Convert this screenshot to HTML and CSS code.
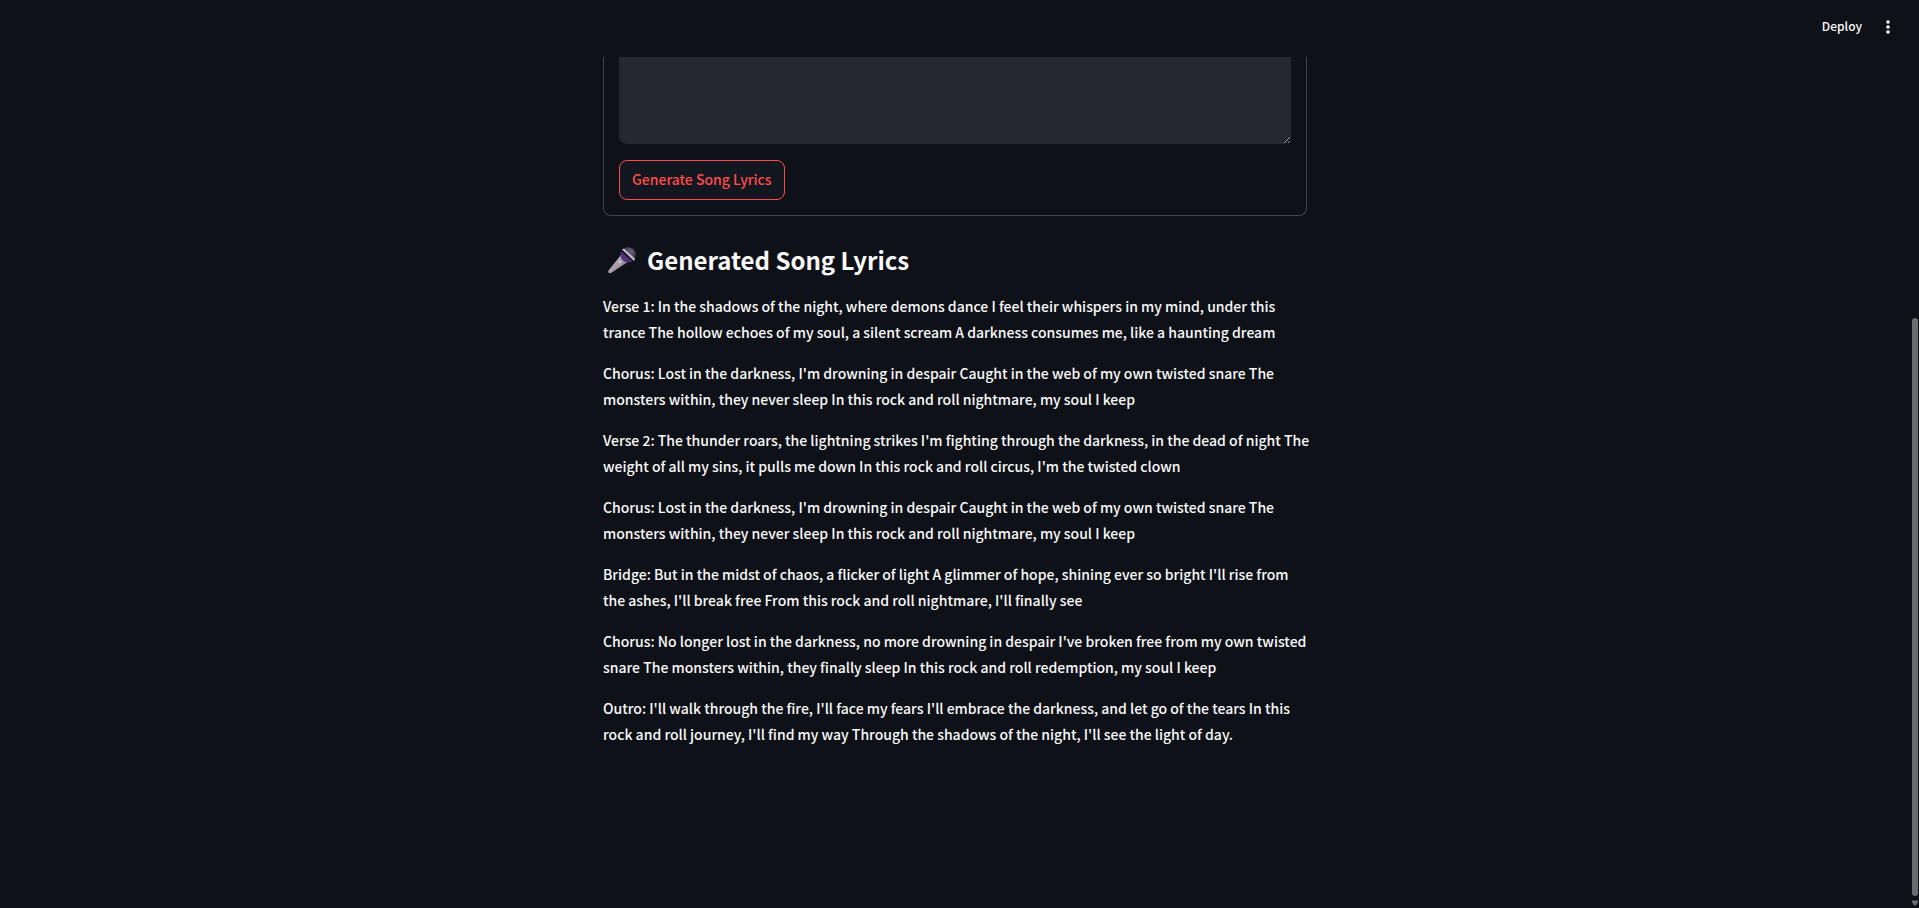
FILE: index.html
```html
<!DOCTYPE html>
<html lang="en">
<head>
<meta charset="utf-8">
<meta name="viewport" content="width=device-width, initial-scale=1">
<title>Song Lyrics Generator</title>
<link rel="stylesheet" href="styles.css">
</head>
<body>
<header class="toolbar">
  <button class="deploy" type="button">Deploy</button>
  <button class="menu" type="button" aria-label="Main menu">
    <svg viewBox="0 0 20 20" width="20" height="20" fill="currentColor" aria-hidden="true"><circle cx="10" cy="5" r="1.8"/><circle cx="10" cy="10" r="1.8"/><circle cx="10" cy="15" r="1.8"/></svg>
  </button>
</header>
<div class="view">
  <main class="content">
    <form class="card">
      <textarea class="prompt" aria-label="Song description"></textarea>
      <button class="generate" type="button">Generate Song Lyrics</button>
    </form>
    <h2 class="title">
      <svg class="mic" viewBox="0 0 30 30" width="30" height="30" aria-hidden="true">
        <defs>
          <linearGradient id="body" x1="0" y1="0" x2="1" y2="1"><stop offset="0.25" stop-color="#b9b2bd"/><stop offset="0.55" stop-color="#a39aa6"/><stop offset="0.8" stop-color="#756c79"/></linearGradient>
          <radialGradient id="head" cx="0.6" cy="0.35" r="0.6"><stop offset="0" stop-color="#6d6279"/><stop offset="1" stop-color="#3b2d4c"/></radialGradient>
        </defs>
        <path d="M14 10 L1.5 25.5 Q0.5 28.5 3.5 28.2 L20.5 17.2 Z" fill="url(#body)"/>
        <path d="M14 6 L25.500 16.500 Q19 19 15.500 15 Q12.500 11.500 14 6Z" fill="#4d3179"/>
        <path d="M16 4.500 Q19 1.500 23 2.500 Q28.500 4 28.700 9.500 Q28.500 13 26.800 14.800 Z" fill="url(#head)"/>
        <path d="M15 4.500 L17 3.500 L28 13.800 L27 16 Z" fill="#c2bdc8"/>
        <circle cx="13" cy="17" r="1.300" fill="#d8d3dc"/>
      </svg>
      <span>Generated Song Lyrics</span>
    </h2>
    <div class="lyrics">
      <p>Verse 1: In the shadows of the night, where demons dance I feel their whispers in my mind, under this<br> trance The hollow echoes of my soul, a silent scream A darkness consumes me, like a haunting dream</p>
      <p>Chorus: Lost in the darkness, I'm drowning in despair Caught in the web of my own twisted snare The<br> monsters within, they never sleep In this rock and roll nightmare, my soul I keep</p>
      <p>Verse 2: The thunder roars, the lightning strikes I'm fighting through the darkness, in the dead of night The<br> weight of all my sins, it pulls me down In this rock and roll circus, I'm the twisted clown</p>
      <p>Chorus: Lost in the darkness, I'm drowning in despair Caught in the web of my own twisted snare The<br> monsters within, they never sleep In this rock and roll nightmare, my soul I keep</p>
      <p>Bridge: But in the midst of chaos, a flicker of light A glimmer of hope, shining ever so bright I'll rise from<br> the ashes, I'll break free From this rock and roll nightmare, I'll finally see</p>
      <p>Chorus: No longer lost in the darkness, no more drowning in despair I've broken free from my own twisted<br> snare The monsters within, they finally sleep In this rock and roll redemption, my soul I keep</p>
      <p>Outro: I'll walk through the fire, I'll face my fears I'll embrace the darkness, and let go of the tears In this<br> rock and roll journey, I'll find my way Through the shadows of the night, I'll see the light of day.</p>
    </div>
  </main>
  <div class="scrollbar" aria-hidden="true">
    <div class="thumb"></div>
    <svg viewBox="0 0 6 6" width="6" height="6"><path d="M0 0.500H6V2L4 5.500H2L0 2Z" fill="#6b6c70"/></svg>
  </div>
</div>
</body>
</html>
```
FILE: styles.css
```css
* { box-sizing: border-box; }
body {
  margin: 0;
  height: 100vh;
  display: flex;
  flex-direction: column;
  overflow: hidden;
  background: #0e1117;
  color: #fafafa;
  color-scheme: dark;
  font-family: "Noto Sans CJK SC", "Noto Sans", sans-serif;
  font-size: 14px;
  font-weight: 500;
  line-height: 26px;
}
button { font: inherit; color: inherit; cursor: pointer; }
.toolbar {
  flex: none;
  height: 57px;
  padding: 14px 21px 0 0;
  display: flex;
  align-items: flex-start;
  justify-content: flex-end;
  gap: 16px;
}
.deploy, .menu { border: 0; padding: 0; background: none; }
.deploy { font-size: 12px; line-height: 24px; }
.menu { display: flex; padding-top: 3px; }
.view { flex: 1; min-height: 0; display: flex; }
.content { width: 100%; max-width: 704px; margin: 0 auto; }
.card {
  padding: 0 15px 15px;
  border: 1px solid #41444c;
  border-top: 0;
  border-radius: 0 0 8px 8px;
  display: flex;
  flex-direction: column;
  align-items: flex-start;
  gap: 16px;
}
.prompt {
  display: block;
  width: 100%;
  height: 87px;
  padding: 16px;
  border: 0;
  border-radius: 0 0 8px 8px;
  background: #262730;
  color: inherit;
  font: inherit;
  resize: vertical;
}
.generate {
  height: 40px;
  padding: 0 12px 2px;
  border: 1px solid #ff4b4b;
  border-radius: 8px;
  background: #131720;
  color: #ff4b4b;
}
.title {
  margin: 27px 0 0;
  padding-left: 4px;
  display: flex;
  align-items: center;
  gap: 10px;
  font-size: 24px;
  font-weight: 700;
  line-height: 34px;
}
.lyrics { display: flex; flex-direction: column; gap: 15px; padding-top: 16px; }
.lyrics p { margin: 0; white-space: nowrap; }
.scrollbar {
  width: 9px;
  padding: 261px 1px 2px 2px;
  display: flex;
  flex-direction: column;
  gap: 4px;
}
.scrollbar svg { flex: none; }
.thumb { flex: 1; border-radius: 3px; background: #6b6c70; }
```
